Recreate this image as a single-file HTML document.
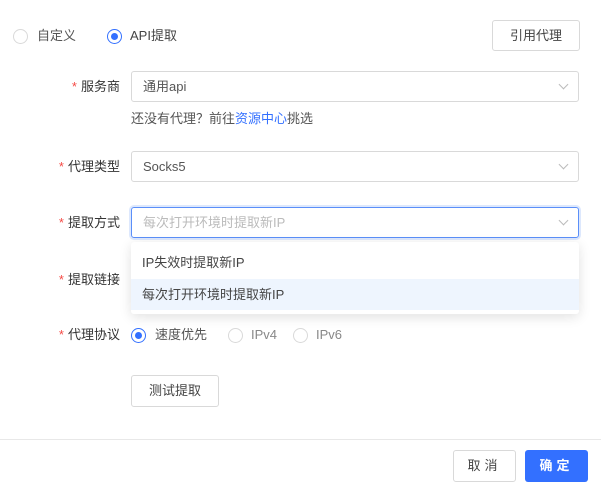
<!DOCTYPE html><html><head><meta charset="utf-8"><style>
body{margin:0;width:601px;height:492px;background:#fff;font-family:"Liberation Sans","Noto Sans CJK SC",sans-serif;font-size:13px;color:#333;position:relative;overflow:hidden}
.a{position:absolute;line-height:16px}
.r{position:absolute;width:13px;height:13px;border:1px solid #d9d9d9;border-radius:50%;background:#fff}
.r.on{border-color:#3370ff}
.r.on::after{content:"";position:absolute;left:3px;top:3px;width:7px;height:7px;border-radius:50%;background:#3370ff}
.lab{position:absolute;right:481px;text-align:right;white-space:nowrap;color:#333;line-height:16px}
.lab b{color:#f54a45;font-weight:normal;margin-right:4px}
.sel{position:absolute;left:131px;width:446px;height:29px;border:1px solid #d9d9d9;border-radius:3px;line-height:29px;text-indent:11px;color:#555}
.chev{position:absolute;right:11px;top:9px;width:6px;height:6px;border-right:1px solid #bbb;border-bottom:1px solid #bbb;transform:rotate(45deg)}
.btn{position:absolute;border:1px solid #d9d9d9;border-radius:3px;text-align:center;background:#fff;color:#444}
</style></head><body>
<div class="r" style="left:13px;top:29px"></div><span class="a" style="left:37px;top:28px;color:#555">自定义</span>
<div class="r on" style="left:107px;top:29px"></div><span class="a" style="left:130px;top:28px;color:#444">API提取</span>
<div class="btn" style="left:492px;top:20px;width:86px;height:29px;line-height:29px">引用代理</div>

<div class="lab" style="top:79px"><b>*</b>服务商</div>
<div class="sel" style="top:71px">通用api<i class="chev"></i></div>
<div class="a" style="left:131px;top:111px;color:#555">还没有代理？前往<span style="color:#3370ff">资源中心</span>挑选</div>

<div class="lab" style="top:159px"><b>*</b>代理类型</div>
<div class="sel" style="top:151px">Socks5<i class="chev"></i></div>

<div class="lab" style="top:215px"><b>*</b>提取方式</div>
<div class="sel" style="top:207px;border-color:#5b8ff9;box-shadow:0 0 0 2px #dde8fd;color:#bbb">每次打开环境时提取新IP<i class="chev"></i></div>

<div class="lab" style="top:272px"><b>*</b>提取链接</div>
<div class="a" style="left:131px;top:242px;width:448px;height:72px;background:#fff;box-shadow:0 3px 12px rgba(0,0,0,.12);border-radius:3px">
<div style="position:absolute;left:0;top:5px;width:100%;height:32px;line-height:32px;text-indent:11px;color:#444">IP失效时提取新IP</div>
<div style="position:absolute;left:0;top:37px;width:100%;height:31px;line-height:31px;text-indent:11px;background:#eef5fe;color:#444">每次打开环境时提取新IP</div>
</div>

<div class="lab" style="top:327px"><b>*</b>代理协议</div>
<div class="r on" style="left:131px;top:328px"></div><span class="a" style="left:155px;top:327px;color:#555">速度优先</span>
<div class="r" style="left:228px;top:328px"></div><span class="a" style="left:251px;top:327px;color:#888">IPv4</span>
<div class="r" style="left:293px;top:328px"></div><span class="a" style="left:316px;top:327px;color:#888">IPv6</span>

<div class="btn" style="left:131px;top:375px;width:86px;height:30px;line-height:30px">测试提取</div>
<div class="a" style="left:0;top:439px;width:601px;height:1px;background:#e8e8e8"></div>
<div class="btn" style="left:453px;top:450px;width:61px;height:30px;line-height:30px;letter-spacing:4px">取消</div>
<div class="btn" style="left:525px;top:450px;width:63px;height:32px;line-height:32px;background:#3370ff;border:none;color:#fff;font-weight:bold;letter-spacing:4px">确定</div>
</body></html>
